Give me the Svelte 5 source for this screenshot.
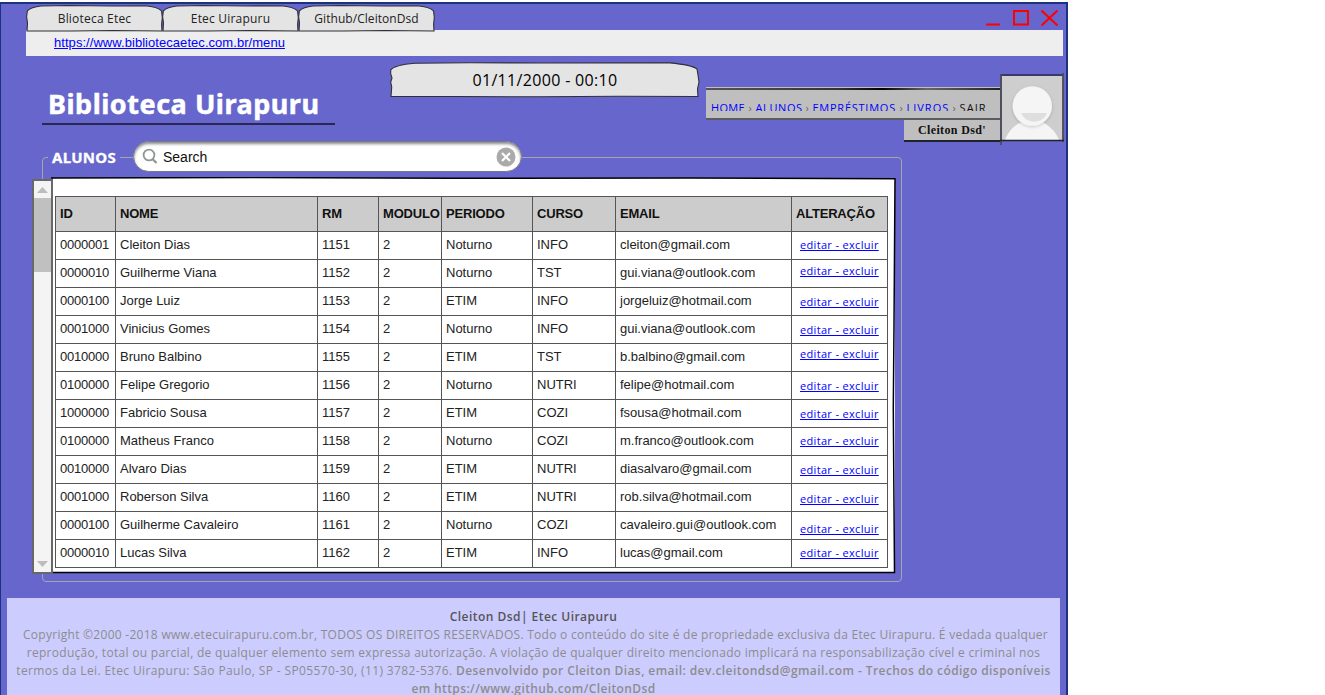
<script>
  const tabs = ['Blioteca Etec', 'Etec Uirapuru', 'Github/CleitonDsd'];
  const heads = ['ID', 'NOME', 'RM', 'MODULO', 'PERIODO', 'CURSO', 'EMAIL', 'ALTERAÇÃO'];
  // Label, column width and letter spacing.
  const crumbs = [['HOME', 34, 0.3], ['ALUNOS', 46.5, 0.6], ['EMPRÉSTIMOS', 83.5, 0.75], ['LIVROS', 42.5, 1]];
  // The last number of each row nudges its action link vertically.
  const rows = [
    ['0000001', 'Cleiton Dias', '1151', '2', 'Noturno', 'INFO', 'cleiton@gmail.com', 0],
    ['0000010', 'Guilherme Viana', '1152', '2', 'Noturno', 'TST', 'gui.viana@outlook.com', -2],
    ['0000100', 'Jorge Luiz', '1153', '2', 'ETIM', 'INFO', 'jorgeluiz@hotmail.com', 1],
    ['0001000', 'Vinicius Gomes', '1154', '2', 'Noturno', 'INFO', 'gui.viana@outlook.com', 1],
    ['0010000', 'Bruno Balbino', '1155', '2', 'ETIM', 'TST', 'b.balbino@gmail.com', -3],
    ['0100000', 'Felipe Gregorio', '1156', '2', 'Noturno', 'NUTRI', 'felipe@hotmail.com', 1],
    ['1000000', 'Fabricio Sousa', '1157', '2', 'ETIM', 'COZI', 'fsousa@hotmail.com', 1],
    ['0100000', 'Matheus Franco', '1158', '2', 'Noturno', 'COZI', 'm.franco@outlook.com', 0],
    ['0010000', 'Alvaro Dias', '1159', '2', 'ETIM', 'NUTRI', 'diasalvaro@gmail.com', 1],
    ['0001000', 'Roberson Silva', '1160', '2', 'ETIM', 'NUTRI', 'rob.silva@hotmail.com', 2],
    ['0000100', 'Guilherme Cavaleiro', '1161', '2', 'Noturno', 'COZI', 'cavaleiro.gui@outlook.com', 4],
    ['0000010', 'Lucas Silva', '1162', '2', 'ETIM', 'INFO', 'lucas@gmail.com', 0]
  ];
</script>

<main class="frame">
  <div class="tabrow">
    {#each tabs as tab, i}
      <div class="tab">
        <svg class="shape" viewBox="0 0 137 28" preserveAspectRatio="none"><path d="M1 27 1.5 19 .6 12 1.4 6Q5 2 15 1L42 .6 85 1 119 .7Q132 2 135.5 6L136.3 13 135.6 20 136 27 87 26.5 45 27Z" /></svg>
        <span class="tablabel t{i}">{tab}</span>
      </div>
    {/each}
    <svg class="controls" width="74" height="18" viewBox="0 0 74 18"><path d="M0 15.5H14M28 2H42V15.5H28ZM55.5 1.5 71.5 16.5M71.5 1.5 55.5 16.5" /></svg>
  </div>
  <div class="address"><a href="#menu">https://www.bibliotecaetec.com.br/menu</a></div>

  <header>
    <h1><span>Biblioteca Uirapuru</span></h1>
    <div class="date">
      <svg class="shape" viewBox="0 0 310 36" preserveAspectRatio="none"><path d="M1 34.5 1.7 25 .7 20 2 16 .7 12V8Q4 3 25 1.2L80 .8 150 1 280 .9Q302 3 307 7L308 13 309 20 307.5 27 308 34.5 230 34.3 150 34.8 65 34.5Z" /></svg>
      <span>01/11/2000 - 00:10</span>
    </div>
    <div class="user">
      <nav>
        <div class="crumbs">
          {#each crumbs as [label, width, spacing]}<a href="#nav" style:width="{width}px" style:letter-spacing="{spacing}px">{label}</a><i>›</i>{/each}<b>SAIR</b>
        </div>
      </nav>
      <div class="name"><span>Cleiton Dsd'</span></div>
    </div>
    <svg class="avatar" width="65" height="74" viewBox="0 0 65 74">
      <defs><filter id="soft" x="-30%" y="-30%" width="160%" height="160%"><feDropShadow dx="0" dy="1" stdDeviation="1.6" flood-opacity=".2" /></filter></defs>
      <path d="M2 3H63V68H2Z" fill="#cecece" />
      <path d="M5 67C9 57 16 51 22 49H42C49 52 56 59 59 67Z" fill="#f5f5f5" />
      <circle cx="32.3" cy="33" r="19.7" fill="#f5f5f5" filter="url(#soft)" />
      <path d="M21 40H47C43 51 26 52 21 40Z" fill="#dedede" />
      <path d="M0 2H64" stroke="#38386c" stroke-width="2" />
      <path d="M1 1V72M63 0V69" stroke="#4d4d55" stroke-width="1.8" />
      <path d="M0 67.5H64" stroke="#22222c" stroke-width="1.6" />
    </svg>
  </header>

  <section>
    <div class="legend">
      <h2>ALUNOS</h2>
      <div class="search">
        <svg width="17" height="17" viewBox="0 0 17 17"><circle cx="7" cy="7" r="5.4" fill="none" stroke="#8e9696" stroke-width="1.8" /><path d="M10.5 11 14.5 15" stroke="#8e9696" stroke-width="2.3" /></svg>
        <span>Search</span>
        <svg width="20" height="20" viewBox="0 0 20 20"><circle cx="10" cy="10" r="9.5" fill="#aaa" /><path d="M6 6 14 14M14 6 6 14" stroke="#fff" stroke-width="2.2" /></svg>
      </div>
    </div>
    <div class="list">
      <div class="scrollbar">
        <div class="arrow"><svg width="11" height="6"><path d="M0 6 5.5 0 11 6Z" /></svg></div>
        <div class="thumb"></div>
        <div class="arrow down"><svg width="11" height="6"><path d="M0 0H11L5.5 6Z" /></svg></div>
      </div>
      <div class="panel">
        <svg class="sketch" width="846" height="398" viewBox="0 0 846 398"><path d="M0 1 200 .6 400 1.2 640 1 844 1.8 843 150 842.3 230 843.5 395.5H2" /></svg>
        <table>
          <colgroup><col class="c0" /><col class="c1" /><col class="c2" /><col class="c3" /><col class="c4" /><col class="c5" /><col class="c6" /><col class="c7" /></colgroup>
          <thead><tr>{#each heads as h}<th>{h}</th>{/each}</tr></thead>
          <tbody>
            {#each rows as r}
              <tr>
                {#each r.slice(0, 7) as v}<td>{v}</td>{/each}
                <td class="act"><div style:padding-top="{4 + r[7]}px"><a href="#edit">editar - excluir</a></div></td>
              </tr>
            {/each}
          </tbody>
        </table>
      </div>
    </div>
  </section>

  <footer>
    <p class="f0">Cleiton Dsd| Etec Uirapuru</p>
    <p class="f1">Copyright ©2000 -2018 www.etecuirapuru.com.br, TODOS OS DIREITOS RESERVADOS. Todo o conteúdo do site é de propriedade exclusiva da Etec Uirapuru. É vedada qualquer</p>
    <p class="f2">reprodução, total ou parcial, de qualquer elemento sem expressa autorização. A violação de qualquer direito mencionado implicará na responsabilização cível e criminal nos</p>
    <p class="f3"><span>termos da Lei. Etec Uirapuru: São Paulo, SP - SP05570-30, (11) 3782-5376.</span> <b>Desenvolvido por Cleiton Dias, email: dev.cleitondsd@gmail.com - Trechos do código disponíveis</b></p>
    <p class="f4"><b>em https://www.github.com/CleitonDsd</b></p>
  </footer>
</main>

<style>
  :global(body) { margin: 0; background: #fff; overflow: hidden; }
  * { box-sizing: border-box; }
  a { color: #00f; text-decoration: underline; }
  .frame { width: 1068px; height: 693px; margin-top: 2px; overflow: hidden; background: #66c; border: solid #1c3180; border-width: 2px 2px 0 1px; font-family: "Liberation Sans", Arial, sans-serif; font-size: 13px; color: #111; display: flow-root; }
  .tabrow { display: flex; height: 27px; margin: 1px 0 -2px 25px; position: relative; z-index: 1; }
  .tab { width: 137px; margin-right: -1px; height: 27px; position: relative; text-align: center; line-height: 27px; font-family: "Open Sans", sans-serif; font-size: 12px; letter-spacing: .2px; color: #222; white-space: nowrap; }
  .shape { position: absolute; inset: 0; width: 100%; height: 100%; overflow: visible; }
  .shape path { fill: #e4e4e4; stroke: #303038; stroke-width: 1.1; }
  .tablabel, .date span { position: relative; }
  .t2 { letter-spacing: .05px; }
  .controls { margin: 4px 6px 0 auto; }
  .controls path { fill: none; stroke: red; stroke-width: 2; }
  .address { width: 1037px; height: 26px; margin-left: 25px; padding-left: 28px; background: #eee; line-height: 26px; font-size: 13px; letter-spacing: .05px; }

  header { display: flex; height: 101px; padding-left: 41px; align-items: flex-start; }
  h1 { margin: 0 55px 0 0; width: 293px; height: 69px; border-bottom: 2px solid #29294f; padding: 31px 0 0 6px; font: bold 27px/34px "Noto Sans", Tahoma, sans-serif; letter-spacing: .53px; -webkit-text-stroke: .5px #fff; color: #fff; white-space: nowrap; }
  .date { position: relative; width: 310px; height: 36px; margin-top: 6px; text-align: center; font: 16px/36px "Open Sans", sans-serif; letter-spacing: .33px; color: #000; }
  .user { width: 294px; margin: 31px 0 0 6px; display: flex; flex-direction: column; align-items: flex-end; }
  nav { width: 294px; height: 33px; background: #bfbfbf; padding: 1px 0 0 5px; border-bottom: 2px solid #5b5b62; }
  nav::before { content: ""; display: block; height: 2px; margin-left: -5px; background: linear-gradient(90deg, #555, #333 45%, #000 60%, #666 75%, #222); }
  .crumbs { height: 21px; overflow: hidden; font: 11px/12px "Open Sans", sans-serif; padding-top: 12px; display: flex; white-space: nowrap; }
  .crumbs a { text-decoration: none; flex: none; }
  .crumbs i { font-style: normal; color: #666; width: 10.5px; text-align: center; flex: none; }
  .crumbs b { font-weight: normal; letter-spacing: 1.1px; }
  .name { width: 96px; height: 22px; background: #bfbfbf; border-bottom: 2px solid #22222c; padding-left: 14px; font: bold 12px/21px "Liberation Serif", serif; letter-spacing: .35px; white-space: nowrap; }
  .avatar { margin: 17px 0 0 0; flex: none; position: relative; }

  section { width: 860px; height: 425px; margin-left: 41px; border: 1px solid #a6a6a6; border-radius: 4px; }
  .legend { display: flex; height: 31px; margin-top: -17px; padding-left: 5px; align-items: center; }
  h2 { margin: 0; width: 72px; padding-left: 4px; background: #66c; color: #fff; font: bold 15px/30px "Noto Sans", Tahoma, sans-serif; letter-spacing: .3px; -webkit-text-stroke: .3px #fff; white-space: nowrap; }
  .search { width: 389px; height: 31px; margin-left: 13px; border: 1px solid #78788a; border-radius: 16px; background: #fff; box-shadow: inset 0 2px 3px #0007; display: flex; align-items: center; padding: 0 5px 0 8px; }
  .search span { flex: 1; font-size: 14px; padding-left: 4px; }
  .list { display: flex; margin: 7px 0 0 -11px; position: relative; height: 395px; }
  .scrollbar { width: 21px; height: 395px; border: 2px solid #686868; background: #f4f4f4; display: flex; flex-direction: column; }
  .arrow { height: 17px; display: flex; align-items: center; justify-content: center; }
  .arrow path { fill: #bcbcbc; }
  .thumb { height: 74px; background: #c0c0c0; flex: none; }
  .down { margin-top: auto; }
  .panel { position: relative; width: 842px; height: 395px; background: #fff; margin-top: -1px; padding: 18px 0 0 2px; }
  .sketch { position: absolute; left: -2px; top: -1px; }
  .sketch path { fill: none; stroke: #000; stroke-width: 1.5; }
  table { position: relative; border-collapse: collapse; table-layout: fixed; width: 833px; }
  .c0 { width: 60px; } .c1 { width: 202px; } .c2 { width: 61px; } .c3 { width: 63px; }
  .c4 { width: 91px; } .c5 { width: 83px; } .c6 { width: 176px; } .c7 { width: 96px; }
  th, td { border: 1px solid #555; padding: 0 0 0 4px; text-align: left; white-space: nowrap; }
  th { height: 35px; background: #ccc; color: #111; padding-bottom: 2px; letter-spacing: -.2px; }
  td { height: 28px; line-height: 25px; padding-bottom: 2px; color: #222; }
  td:first-child { letter-spacing: -.23px; }
  .act { padding: 0 0 0 8px; vertical-align: top; }
  .act div { height: 27px; line-height: 17px; font-family: "Open Sans", sans-serif; font-size: 11px; letter-spacing: .33px; }

  footer { margin: 16px 0 0 6px; width: 1053px; height: 110px; background: #ccf; padding-top: 10px; color: #8c8c8c; font: 12px/18px "Open Sans", "Trebuchet MS", sans-serif; text-align: center; white-space: nowrap; }
  footer p { margin: 0; }
  .f0 { font-weight: 600; color: #555; letter-spacing: .46px; }
  .f1 { letter-spacing: .278px; padding-left: 4px; }
  .f2 { letter-spacing: .29px; }
  .f3 { letter-spacing: .38px; }
  .f3 b { letter-spacing: .42px; }
  .f4 { letter-spacing: .38px; }
  .f3 b, .f4 b { font-weight: 600; }
</style>
